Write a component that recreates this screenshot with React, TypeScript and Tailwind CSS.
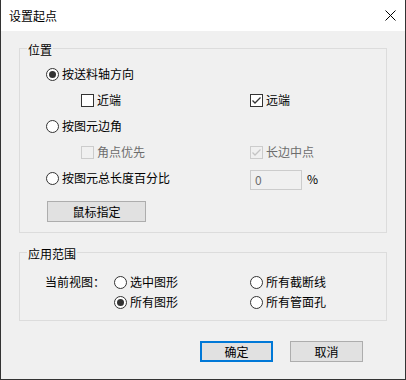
import React from 'react';

const Radio = ({ checked = false }: { checked?: boolean }) => (
  <span className="w-[13px] h-[13px] shrink-0 rounded-full border border-[#333] bg-white flex items-center justify-center">
    {checked && <span className="w-[7px] h-[7px] rounded-full bg-[#333]" />}
  </span>
);

const Checkbox = ({ checked = false, disabled = false }: { checked?: boolean; disabled?: boolean }) => (
  <span
    className={`w-[13px] h-[13px] shrink-0 border flex items-center justify-center ${
      disabled ? 'border-[#cccccc] bg-[#f0f0f0]' : 'border-[#333] bg-white'
    }`}
  >
    {checked && (
      <svg width="11" height="11" viewBox="0 0 11 11">
        <polyline
          points="1.5,5.5 4,8 9.5,2.5"
          fill="none"
          stroke={disabled ? '#c4c4c4' : '#333'}
          strokeWidth="1.3"
        />
      </svg>
    )}
  </span>
);

const Option = ({ children, checked }: { children: React.ReactNode; checked?: boolean }) => (
  <div className="flex items-center gap-[3px]">
    <Radio checked={checked} />
    <span>{children}</span>
  </div>
);

const Check = ({ children, checked, disabled }: { children: React.ReactNode; checked?: boolean; disabled?: boolean }) => (
  <div className={`flex items-center gap-[3px] ${disabled ? 'text-[#6d6d6d]' : ''}`}>
    <Checkbox checked={checked} disabled={disabled} />
    <span>{children}</span>
  </div>
);

export default function App() {
  return (
    <div className="w-[406px] h-[380px] flex flex-col border-x border-b border-[#333] bg-[#f0f0f0] text-black text-[12px] leading-[16px] font-['Noto_Sans_CJK_SC','Noto_Sans',sans-serif]">
      {/* title bar */}
      <div className="h-[31px] shrink-0 bg-white flex items-center justify-between pl-[8px] pr-[9px]">
        <span>设置起点</span>
        <svg width="11" height="11" viewBox="0 0 11 11">
          <path d="M0.5 0.5 L10.5 10.5 M10.5 0.5 L0.5 10.5" stroke="#000" strokeWidth="1" fill="none" />
        </svg>
      </div>

      <div className="flex flex-col px-[18px]">
        {/* 位置 */}
        <div className="relative mt-[17px] border border-[#dcdcdc] pt-[12px] pb-[10px]">
          <span className="absolute left-[7px] top-[-7px] px-[1px] bg-[#f0f0f0]">位置</span>

          <div className="h-[26px] flex items-center pl-[26px]">
            <Option checked>按送料轴方向</Option>
          </div>
          <div className="h-[26px] flex items-center pl-[61px]">
            <div className="w-[169px]">
              <Check>近端</Check>
            </div>
            <Check checked>远端</Check>
          </div>
          <div className="h-[26px] flex items-center pl-[26px]">
            <Option>按图元边角</Option>
          </div>
          <div className="h-[26px] flex items-center pl-[61px]">
            <div className="w-[169px]">
              <Check disabled>角点优先</Check>
            </div>
            <Check checked disabled>长边中点</Check>
          </div>
          <div className="h-[26px] flex items-center pl-[26px]">
            <div className="w-[204px]">
              <Option>按图元总长度百分比</Option>
            </div>
            <div className="w-[52px] h-[20px] mt-[4px] border border-[#cccccc] bg-[#f0f0f0] flex items-center pl-[4px] text-[#6d6d6d]">
              0
            </div>
            <span className="ml-[5px] mt-[2px]">%</span>
          </div>

          <div className="ml-[27px] mt-[10px] w-[99px] h-[21px] border border-[#adadad] bg-[#e1e1e1] flex items-center justify-center">
            鼠标指定
          </div>
        </div>

        {/* 应用范围 */}
        <div className="relative mt-[19px] border border-[#dcdcdc] pt-[19px] pb-[8px]">
          <span className="absolute left-[7px] top-[-7px] px-[1px] bg-[#f0f0f0]">应用范围</span>
          <div className="grid grid-cols-[69px_136px_1fr] pl-[25px] auto-rows-[20px] items-center">
            <span>当前视图：</span>
            <Option>选中图形</Option>
            <Option>所有截断线</Option>
            <span />
            <Option checked>所有图形</Option>
            <Option>所有管面孔</Option>
          </div>
        </div>

        {/* buttons */}
        <div className="mt-[20px] flex justify-end gap-[17px] pr-[24px]">
          <div className="w-[73px] h-[21px] border-2 border-[#0078d7] bg-[#e1e1e1] flex items-center justify-center">
            确定
          </div>
          <div className="w-[73px] h-[21px] border border-[#adadad] bg-[#e1e1e1] flex items-center justify-center">
            取消
          </div>
        </div>
      </div>
    </div>
  );
}
